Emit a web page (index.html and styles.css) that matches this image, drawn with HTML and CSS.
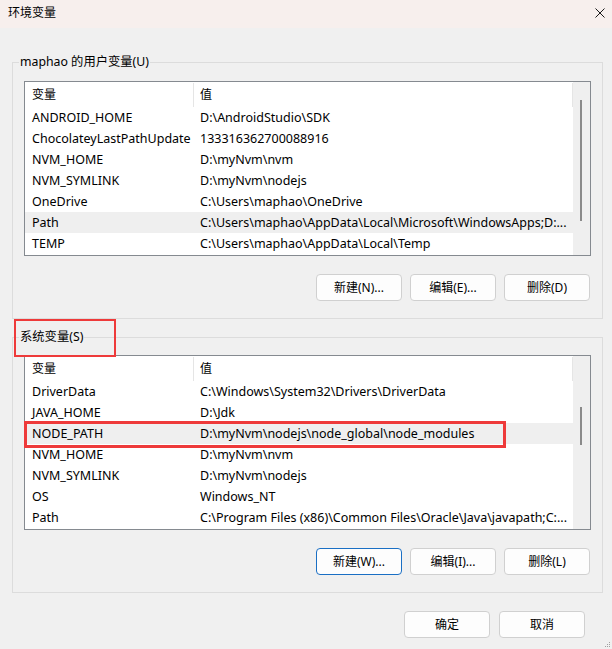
FILE: index.html
```html
<!DOCTYPE html>
<html lang="zh-CN">
<head>
<meta charset="utf-8">
<title>环境变量</title>
<link rel="stylesheet" href="styles.css">
</head>
<body>
<div class="dialog">
  <div class="titlebar">
    <span class="title">环境变量</span>
    <svg class="close" width="10" height="10" viewBox="0 0 10 10"><path d="M0.5 0.5 L9.5 9.5 M9.5 0.5 L0.5 9.5" stroke="#1a1a1a" stroke-width="1" fill="none"/></svg>
  </div>
  <div class="content">
    <fieldset class="group group-user">
      <legend>maphao 的用户变量(U)</legend>
      <div class="list">
        <div class="rows">
          <div class="row head"><div class="cell c1">变量</div><div class="cell c2">值</div></div>
          <div class="row"><div class="cell c1">ANDROID_HOME</div><div class="cell c2">D:\AndroidStudio\SDK</div></div>
          <div class="row"><div class="cell c1">ChocolateyLastPathUpdate</div><div class="cell c2">133316362700088916</div></div>
          <div class="row"><div class="cell c1">NVM_HOME</div><div class="cell c2">D:\myNvm\nvm</div></div>
          <div class="row"><div class="cell c1">NVM_SYMLINK</div><div class="cell c2">D:\myNvm\nodejs</div></div>
          <div class="row"><div class="cell c1">OneDrive</div><div class="cell c2">C:\Users\maphao\OneDrive</div></div>
          <div class="row sel"><div class="cell c1">Path</div><div class="cell c2">C:\Users\maphao\AppData\Local\Microsoft\WindowsApps;D:...</div></div>
          <div class="row"><div class="cell c1">TEMP</div><div class="cell c2">C:\Users\maphao\AppData\Local\Temp</div></div>
        </div>
        <div class="scrollbar"><div class="thumb thumb-user"></div></div>
      </div>
      <div class="buttons">
        <button class="btn">新建(N)...</button>
        <button class="btn">编辑(E)...</button>
        <button class="btn">删除(D)</button>
      </div>
    </fieldset>

    <fieldset class="group group-sys">
      <legend><span class="mark mark-legend"></span>系统变量(S)</legend>
      <div class="list">
        <div class="rows">
          <div class="row head"><div class="cell c1">变量</div><div class="cell c2">值</div></div>
          <div class="row"><div class="cell c1">DriverData</div><div class="cell c2">C:\Windows\System32\Drivers\DriverData</div></div>
          <div class="row"><div class="cell c1">JAVA_HOME</div><div class="cell c2">D:\Jdk</div></div>
          <div class="row sel marked"><span class="mark mark-row"></span><div class="cell c1">NODE_PATH</div><div class="cell c2">D:\myNvm\nodejs\node_global\node_modules</div></div>
          <div class="row"><div class="cell c1">NVM_HOME</div><div class="cell c2">D:\myNvm\nvm</div></div>
          <div class="row"><div class="cell c1">NVM_SYMLINK</div><div class="cell c2">D:\myNvm\nodejs</div></div>
          <div class="row"><div class="cell c1">OS</div><div class="cell c2">Windows_NT</div></div>
          <div class="row"><div class="cell c1">Path</div><div class="cell c2">C:\Program Files (x86)\Common Files\Oracle\Java\javapath;C:...</div></div>
        </div>
        <div class="scrollbar"><div class="thumb thumb-sys"></div></div>
      </div>
      <div class="buttons">
        <button class="btn focus">新建(W)...</button>
        <button class="btn">编辑(I)...</button>
        <button class="btn">删除(L)</button>
      </div>
    </fieldset>

    <div class="footer">
      <button class="btn">确定</button>
      <button class="btn">取消</button>
    </div>
  </div>
  <svg class="grip" width="6" height="6" viewBox="0 0 6 6">
    <rect x="4" y="0" width="1" height="1" fill="#a0a0a0"/>
    <rect x="2" y="2" width="1" height="1" fill="#a0a0a0"/>
    <rect x="4" y="2" width="1" height="1" fill="#a0a0a0"/>
    <rect x="0" y="4" width="1" height="1" fill="#a0a0a0"/>
    <rect x="2" y="4" width="1" height="1" fill="#a0a0a0"/>
    <rect x="4" y="4" width="1" height="1" fill="#a0a0a0"/>
  </svg>
</div>
</body>
</html>
```

FILE: styles.css
```css
* { box-sizing: border-box; }
html, body {
  margin: 0;
  padding: 0;
  background: #f0f0f0;
}
body {
  font-family: "Noto Sans", "Noto Sans CJK SC", sans-serif;
  font-size: 12px;
  color: #000;
  width: 612px;
  height: 649px;
  overflow: hidden;
}
.dialog {
  position: relative;
  width: 612px;
  height: 649px;
}
.titlebar {
  height: 28px;
  background: #f7efed;
  display: flex;
  align-items: center;
  justify-content: space-between;
  padding: 0 7px 3px 8px;
}
.title {
  font-size: 12px;
  line-height: 16px;
}
.close { display: block; }

.content {
  padding: 26px 9px 0 12px;
}
.group {
  margin: 0;
  border: 1px solid #dcdcdc;
  padding: 11px 11px 17px 11px;
  min-width: 0;
}
.group-sys {
  margin-top: 10px;
  padding-top: 10px;
}
legend {
  position: relative;
  margin-left: -5px;
  padding: 0 1px;
  line-height: 16px;
  font-size: 12.3px;
}
.list {
  display: flex;
  height: 175px;
  border: 1px solid #858a90;
  background: #fff;
}
.rows {
  width: 548px;
}
.row {
  display: grid;
  grid-template-columns: 169px 379px;
  height: 21px;
  align-items: center;
  white-space: nowrap;
  font-size: 12.5px;
}
.row.head {
  height: 25px;
  align-items: stretch;
  font-size: 12px;
}
.row.head .cell {
  display: flex;
  align-items: center;
  border-right: 1px solid #e5e5e5;
  margin-top: 1px;
}
.cell {
  overflow: hidden;
  line-height: 16px;
}
.c1 { padding-left: 7px; }
.c2 { padding-left: 6px; }
.row.sel { background: #efefef; }
.row.marked { position: relative; }

.scrollbar {
  flex: 1;
  background: #efefef;
  padding-left: 7px;
}
.thumb {
  width: 2px;
  background: #8a8a8a;
}
.thumb-user { margin-top: 18px; height: 121px; }
.thumb-sys { margin-top: 51px; height: 38px; }

.buttons {
  display: flex;
  justify-content: flex-end;
  gap: 8px;
  margin-top: 18px;
  padding-right: 1px;
}
.btn {
  width: 86px;
  height: 27px;
  padding: 0;
  border: 1px solid #d0d0d0;
  border-radius: 4px;
  background: #fdfdfd;
  font-family: "Noto Sans", "Noto Sans CJK SC", sans-serif;
  font-size: 12px;
  color: #000;
  line-height: 16px;
}
.btn.focus {
  border-color: #1a6fc4;
}
.footer {
  display: flex;
  justify-content: flex-end;
  gap: 9px;
  margin-top: 18px;
  padding-right: 18px;
}

.mark {
  position: absolute;
  border: 2px solid #ee3a3a;
  pointer-events: none;
}
.mark-legend {
  left: -5px;
  top: -10px;
  width: 102px;
  height: 38px;
}
.mark-row {
  left: -1px;
  top: -2px;
  width: 482px;
  height: 27px;
  border-width: 3px;
}
.grip {
  position: absolute;
  right: 1px;
  bottom: 1px;
}
```
